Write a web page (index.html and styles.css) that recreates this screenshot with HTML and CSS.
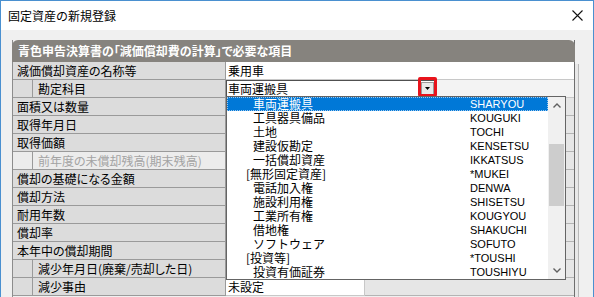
FILE: index.html
```html
<!DOCTYPE html>
<html lang="ja">
<head>
<meta charset="UTF-8">
<title>固定資産の新規登録</title>
<link rel="stylesheet" href="styles.css">
</head>
<body>
<div class="window">
  <div class="titlebar">
    <span class="title">固定資産の新規登録</span>
    <svg class="close" width="11" height="11" viewBox="0 0 11 11"><path d="M0.5 0.5 L10.5 10.5 M10.5 0.5 L0.5 10.5" stroke="#111" stroke-width="1.1" fill="none"/></svg>
  </div>
  <div class="client">
    <div class="panel">
      <div class="panel-head">青色申告決算書の「減価償却費の計算」で必要な項目</div>
      <div class="rows">
        <div class="row">
          <div class="label">減価償却資産の名称等</div>
          <div class="value full">乗用車</div>
        </div>
        <div class="row">
          <div class="stub"></div><div class="label sub">勘定科目</div>
          <div class="rest">
            <div class="combo">
              <span class="combo-text">車両運搬具</span>
              <span class="combo-btn"><svg width="5" height="3" viewBox="0 0 5 3"><path d="M0 0 H5 L2.5 3 Z" fill="#000"/></svg></span>
            </div>
          </div>
        </div>
        <div class="row"><div class="label">面積又は数量</div><div class="value"></div><div class="extra"></div></div>
        <div class="row"><div class="label">取得年月日</div><div class="value"></div><div class="extra"></div></div>
        <div class="row"><div class="label">取得価額</div><div class="value"></div><div class="extra"></div></div>
        <div class="row"><div class="stub off"></div><div class="label sub off">前年度の未償却残高(期末残高)</div><div class="value"></div><div class="extra"></div></div>
        <div class="row"><div class="label">償却の基礎になる金額</div><div class="value"></div><div class="extra"></div></div>
        <div class="row"><div class="label">償却方法</div><div class="value"></div><div class="extra"></div></div>
        <div class="row"><div class="label">耐用年数</div><div class="value"></div><div class="extra"></div></div>
        <div class="row"><div class="label">償却率</div><div class="value"></div><div class="extra"></div></div>
        <div class="row"><div class="label">本年中の償却期間</div><div class="value"></div><div class="extra"></div></div>
        <div class="row"><div class="stub"></div><div class="label sub">減少年月日(廃棄/売却した日)</div><div class="value"></div><div class="extra"></div></div>
        <div class="row"><div class="stub"></div><div class="label sub">減少事由</div><div class="value">未設定</div><div class="extra"></div></div>
      </div>

      <div class="marker"></div>

      <div class="droplist">
        <ul class="items">
          <li class="item selected"><span class="name">車両運搬具</span><span class="code">SHARYOU</span></li>
          <li class="item"><span class="name">工具器具備品</span><span class="code">KOUGUKI</span></li>
          <li class="item"><span class="name">土地</span><span class="code">TOCHI</span></li>
          <li class="item"><span class="name">建設仮勘定</span><span class="code">KENSETSU</span></li>
          <li class="item"><span class="name">一括償却資産</span><span class="code">IKKATSUS</span></li>
          <li class="item group"><span class="name">[無形固定資産]</span><span class="code">*MUKEI</span></li>
          <li class="item"><span class="name">電話加入権</span><span class="code">DENWA</span></li>
          <li class="item"><span class="name">施設利用権</span><span class="code">SHISETSU</span></li>
          <li class="item"><span class="name">工業所有権</span><span class="code">KOUGYOU</span></li>
          <li class="item"><span class="name">借地権</span><span class="code">SHAKUCHI</span></li>
          <li class="item"><span class="name">ソフトウェア</span><span class="code">SOFUTO</span></li>
          <li class="item group"><span class="name">[投資等]</span><span class="code">*TOUSHI</span></li>
          <li class="item"><span class="name">投資有価証券</span><span class="code">TOUSHIYU</span></li>
        </ul>
        <div class="scrollbar">
          <div class="arrow"><svg width="8" height="5" viewBox="0 0 8 5"><path d="M0.5 4.5 L4 1 L7.5 4.5" stroke="#606060" stroke-width="1.4" fill="none"/></svg></div>
          <div class="track"><div class="thumb"></div></div>
          <div class="arrow"><svg width="8" height="5" viewBox="0 0 8 5"><path d="M0.5 0.5 L4 4 L7.5 0.5" stroke="#606060" stroke-width="1.4" fill="none"/></svg></div>
        </div>
      </div>
    </div>
    <div class="side"></div>
  </div>
</div>
</body>
</html>
```

FILE: styles.css
```css
* {
	box-sizing: border-box;
}
html, body {
	margin: 0;
	padding: 0;
	overflow: hidden;
}
body {
	font-family: "Noto Sans CJK JP", "Noto Sans", sans-serif;
	font-size: 12px;
	color: #000;
	background: #fff;
}

.window {
	width: 594px;
	height: 297px;
	border: 1px solid #4a90d0;
	border-bottom: none;
	display: flex;
	flex-direction: column;
	overflow: hidden;
}

/* title bar */
.titlebar {
	height: 29px;
	flex: none;
	background: #fff;
	display: flex;
	align-items: center;
	justify-content: space-between;
	padding: 0 10px 0 7px;
}
.title {
	font-size: 12px;
	line-height: 14px;
}

/* dialog body */
.client {
	flex: 1;
	background: #f0f0f0;
	padding: 10px 0 0 11px;
	display: flex;
}
.panel {
	position: relative;
	width: 563px;
	border-left: 1px solid #8c8c8c;
	border-right: 1px solid #6e6e6e;
}
.side {
	width: 4px;
	margin-top: 24px;
	border-right: 1px solid #b8b8b8;
	background: #e8e8e8;
}
.panel-head {
	height: 22px;
	margin: 0 -1px;
	background: #86837e;
	border-radius: 6px 6px 0 0;
	color: #fff;
	font-weight: bold;
	font-size: 12px;
	line-height: 22px;
	padding-left: 6px;
	font-feature-settings: "palt";
}

/* grid rows */
.row {
	display: flex;
	height: 18px;
	line-height: 17px;
}
.label {
	width: 213px;
	background: #dcdcdc;
	border-right: 1px solid #9a9a9a;
	border-bottom: 1px solid #9a9a9a;
	padding-left: 4px;
	white-space: nowrap;
	font-feature-settings: "palt";
}
.stub {
	width: 20px;
	background: #dcdcdc;
	border-right: 1px solid #9a9a9a;
	border-bottom: 1px solid #9a9a9a;
}
.label.sub {
	width: 193px;
	padding-left: 5px;
}
.stub.off,
.label.off {
	background: #ececec;
}
.label.off {
	color: #a3a3a3;
}
.value {
	width: 139px;
	background: #fff;
	border-right: 1px solid #c8c8c8;
	border-bottom: 1px solid #c8c8c8;
	padding-left: 2px;
}
.value.full {
	flex: 1;
	border-right: none;
}
.extra {
	flex: 1;
	background: #e6e6e6;
	border-bottom: 1px solid #b4b4b4;
}
.rest {
	flex: 1;
	background: #f3f3f3;
	border-bottom: 1px solid #c8c8c8;
}

/* combo box */
.combo {
	width: 210px;
	height: 17px;
	border: 1px solid #505050;
	background: #fff;
	display: flex;
	align-items: center;
}
.combo-text {
	flex: 1;
	padding-left: 1px;
	line-height: 15px;
}
.combo-btn {
	width: 13px;
	height: 13px;
	margin-right: 1px;
	background: #e9e9e9;
	border: 1px solid #9a9a9a;
	display: flex;
	align-items: center;
	justify-content: center;
}

/* annotation box around the dropdown button */
.marker {
	position: absolute;
	left: 405px;
	top: 37px;
	width: 19px;
	height: 20px;
	border: 3px solid #e8141c;
	border-radius: 2px;
}

/* open dropdown list */
.droplist {
	position: absolute;
	left: 213px;
	top: 56px;
	width: 340px;
	height: 184px;
	border: 1px solid #646464;
	background: #fff;
	display: flex;
}
.items {
	list-style: none;
	margin: 0;
	padding: 0;
	flex: 1;
}
.item {
	height: 14px;
	line-height: 14px;
	display: flex;
	white-space: nowrap;
}
.item .name {
	width: 243px;
	padding-left: 26px;
}
.item.group .name {
	padding-left: 19px;
}
.item .code {
	font-family: "Liberation Sans", Arial, sans-serif;
	font-size: 11px;
}
.item.selected {
	background: #0078d7;
	color: #fff;
	outline: 1px dotted #9cc8f0;
	outline-offset: -1px;
}
.scrollbar {
	width: 17px;
	background: #f0f0f0;
	display: flex;
	flex-direction: column;
}
.arrow {
	height: 17px;
	display: flex;
	align-items: center;
	justify-content: center;
}
.track {
	flex: 1;
	padding: 30px 1px 0;
}
.thumb {
	height: 62px;
	background: #cdcdcd;
}
```
